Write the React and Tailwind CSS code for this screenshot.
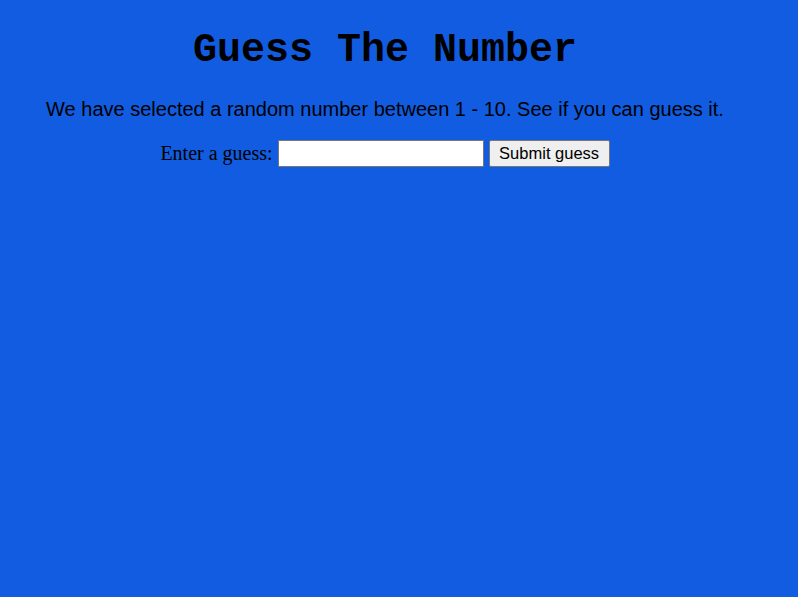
import React, { useState } from "react";

function App() {
  const [guess, setGuess] = useState("");

  return (
    <div className="min-h-[597px] bg-[#115ce0] text-black">
      <div className="w-[770px] pt-[28px] flex flex-col items-center">
        <h1 className="font-['Courier_New','Liberation_Mono',monospace] font-bold text-[40px] leading-[46px]">
          Guess The Number
        </h1>
        <p className="mt-[24px] font-['Arial','Liberation_Sans',sans-serif] text-[20px] leading-[23px]">
          We have selected a random number between 1 - 10. See if you can guess it.
        </p>
        <div className="mt-[17px] flex items-center gap-[5px]">
          <label className="font-['Times_New_Roman','Liberation_Serif',serif] text-[20px]">
            Enter a guess:
          </label>
          <input
            type="text"
            value={guess}
            onChange={(e) => setGuess(e.target.value)}
            className="w-[206px] h-[27px] bg-white border border-[#767676] px-1 font-['Arial','Liberation_Sans',sans-serif] text-[16px]"
          />
          <button className="w-[121px] h-[27px] bg-[#efefef] border border-[#767676] rounded-[2px] font-['Arial','Liberation_Sans',sans-serif] text-[16.5px] leading-none">
            Submit guess
          </button>
        </div>
      </div>
    </div>
  );
}

export default App;
